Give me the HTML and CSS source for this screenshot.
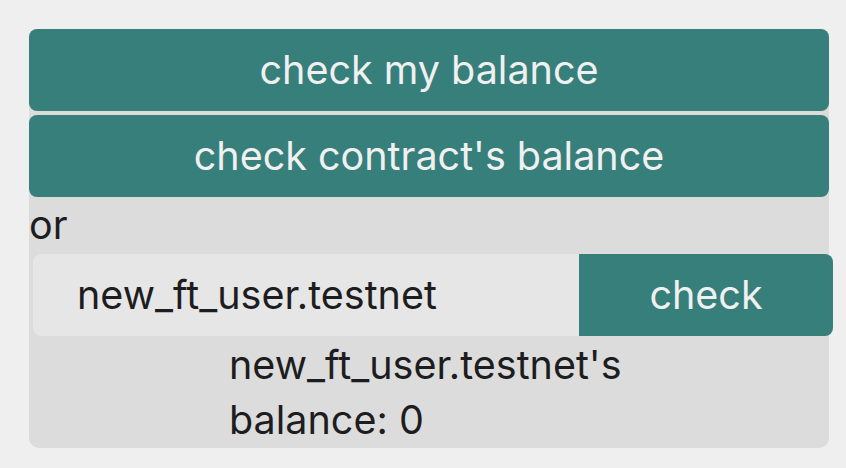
FILE: index.html
```html
<!DOCTYPE html>
<html lang="en">

<head>
    <meta charset="UTF-8">
    <title>Balance</title>
    <link rel="stylesheet" href="styles.css">
</head>

<body>

    <div class="panel">
        <button class="wide-btn">check my balance</button>
        <button class="wide-btn">check contract's balance</button>
        <div class="or">or</div>
        <form class="check-form" onsubmit="return false">
            <input type="text" class="account-input" value="new_ft_user.testnet">
            <button type="submit" class="check-btn">check</button>
        </form>
        <p class="result">new_ft_user.testnet's balance: 0</p>
    </div>

</body>

</html>
```

FILE: styles.css
```css
body {
    margin: 0;
    padding: 29px;
    background-color: #efefef;
    font-family: Inter, "Noto Sans", sans-serif;
    font-size: 39.5px;
    color: #1d1d1f;
}

.panel {
    width: 800px;
    background-color: #dcdcdc;
    border-radius: 10px;
}

.wide-btn {
    display: block;
    width: 100%;
    height: 82px;
    margin-bottom: 4px;
    border: none;
    border-radius: 8px;
    background-color: #377f7b;
    color: #f0f0f0;
    font-family: inherit;
    font-size: inherit;
    cursor: pointer;
}

.or {
    line-height: 57px;
    margin-top: -4px;
}

.check-form {
    display: flex;
    width: 100%;
    height: 82px;
    margin: 0 0 0 4px;
}

.account-input {
    width: 546px;
    box-sizing: border-box;
    padding: 0 0 0 44px;
    border: none;
    border-radius: 8px 0 0 8px;
    background-color: #e6e6e6;
    color: #1d1d1f;
    font-family: inherit;
    font-size: inherit;
    outline: none;
}

.check-btn {
    width: 254px;
    border: none;
    border-radius: 0 8px 8px 0;
    background-color: #377f7b;
    color: #f0f0f0;
    font-family: inherit;
    font-size: inherit;
    cursor: pointer;
}

.result {
    width: 400px;
    margin: 0 auto;
    padding-top: 2px;
    line-height: 55px;
}
```
